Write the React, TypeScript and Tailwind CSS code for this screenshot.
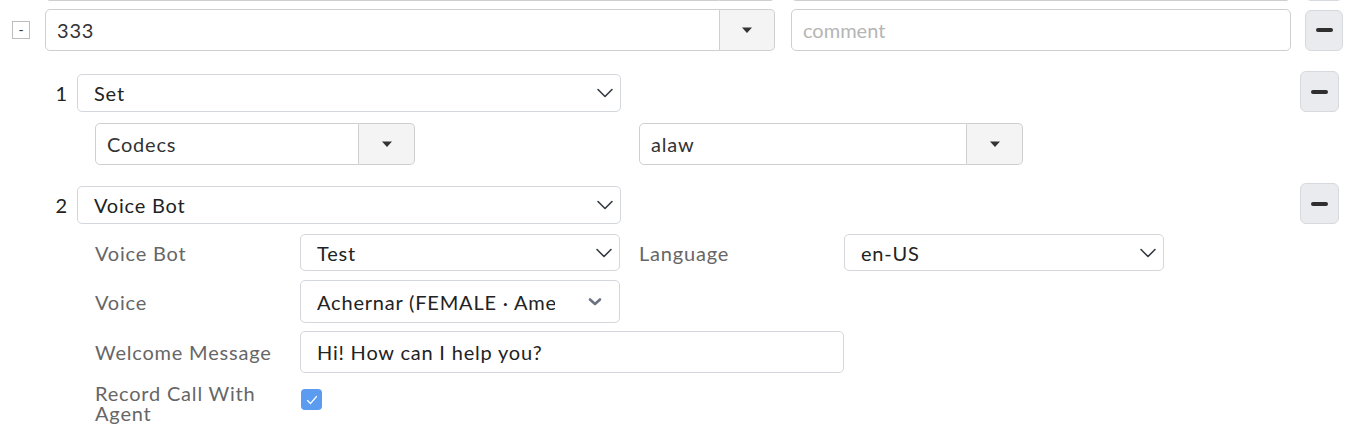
import React from "react";

const font = { fontFamily: "Lato, 'Noto Sans', sans-serif" };

function Caret() {
  return (
    <svg width="12" height="7" viewBox="0 0 12 7">
      <path d="M1 0.5 L11 0.5 L6 6 Z" fill="#333" />
    </svg>
  );
}

function Chevron() {
  return (
    <svg width="18" height="12" viewBox="0 0 18 12" fill="none">
      <path d="M2 2.5 L9 9.5 L16 2.5" stroke="#343a40" strokeWidth="1.6" strokeLinecap="round" strokeLinejoin="round" />
    </svg>
  );
}

function BoldChevron() {
  return (
    <svg width="14" height="10" viewBox="0 0 14 10" fill="none">
      <path d="M2 2.5 L7 7 L12 2.5" stroke="#6b7280" strokeWidth="2.6" strokeLinecap="round" strokeLinejoin="round" />
    </svg>
  );
}

function MinusBtn({ className = "" }: { className?: string }) {
  return (
    <div className={`flex items-center justify-center rounded-md border border-[#d6d9de] bg-[#e9ebef] ${className}`}>
      <div className="h-[4px] w-[17px] rounded-sm bg-[#2f2f2f]" />
    </div>
  );
}

function InputGroup({ value, w, btnW, h = "h-[42px]" }: { value: string; w: string; btnW: string; h?: string }) {
  return (
    <div className={`flex ${w} ${h}`}>
      <div className="flex flex-1 items-center rounded-l-[5px] border border-[#cfcfcf] bg-white pl-[11px] text-[20px] text-[#333]">
        {value}
      </div>
      <div className={`flex ${btnW} items-center justify-center rounded-r-[5px] border border-l-0 border-[#cfcfcf] bg-[#f4f4f4]`}>
        <div className="-ml-[1px] h-full border-l border-[#cfcfcf]" />
        <div className="flex flex-1 items-center justify-center"><Caret /></div>
      </div>
    </div>
  );
}

function Select({ value, w, h = "h-[38px]" }: { value: string; w: string; h?: string }) {
  return (
    <div className={`flex ${w} ${h} items-center justify-between rounded-[5px] border border-[#d3d6db] bg-white pl-[16px] pr-[6px] text-[20px] text-[#222]`}>
      <span>{value}</span>
      <Chevron />
    </div>
  );
}

function TopRow({ peek = false }: { peek?: boolean }) {
  return (
    <div className={`flex items-center ${peek ? "-mt-[41px]" : "mt-[8px]"} h-[42px]`}>
      <div className="ml-[12px] flex h-[18px] w-[18px] items-center justify-center border border-[#bdbdbd] text-[14px] leading-none tracking-normal text-[#333]">
        {peek ? "" : "-"}
      </div>
      <div className="ml-[15px]">
        <InputGroup value={peek ? "" : "333"} w="w-[730px]" btnW="w-[55px]" />
      </div>
      <div className="ml-[16px] flex h-[42px] w-[500px] items-center rounded-[5px] border border-[#cfcfcf] bg-white pl-[11px] text-[20px] tracking-normal text-[#b5b5b5]">
        {peek ? "" : "comment"}
      </div>
      <MinusBtn className="ml-[14px] h-[41px] w-[38px]" />
    </div>
  );
}

function Label({ children, w = "w-[205px]" }: { children: React.ReactNode; w?: string }) {
  return <div className={`${w} text-[20px] leading-[20px] text-[#666]`}>{children}</div>;
}

export default function App() {
  return (
    <div className="h-[434px] w-[1356px] overflow-hidden bg-white tracking-[0.05em]" style={font}>
      <TopRow peek />
      <TopRow />

      {/* Step 1 */}
      <div className="mt-[22px] flex items-center pr-[17px]">
        <div className="w-[68px] text-right text-[20px] text-[#222]">1</div>
        <div className="ml-[9px]">
          <Select value="Set" w="w-[544px]" />
        </div>
        <div className="flex-1" />
        <MinusBtn className="-mt-[2px] h-[41px] w-[39px]" />
      </div>
      <div className="mt-[11px] flex items-center pl-[95px]">
        <InputGroup value="Codecs" w="w-[320px]" btnW="w-[56px]" />
        <div className="ml-[224px]">
          <InputGroup value="alaw" w="w-[384px]" btnW="w-[56px]" />
        </div>
      </div>

      {/* Step 2 */}
      <div className="mt-[20px] flex items-center pr-[17px]">
        <div className="w-[68px] text-right text-[20px] text-[#222]">2</div>
        <div className="ml-[9px]">
          <Select value="Voice Bot" w="w-[544px]" />
        </div>
        <div className="flex-1" />
        <MinusBtn className="-mt-[2px] h-[41px] w-[39px]" />
      </div>

      <div className="mt-[10px] flex flex-col pl-[95px]">
        <div className="flex items-center">
          <Label>Voice Bot</Label>
          <Select value="Test" w="w-[320px]" h="h-[37px]" />
          <div className="ml-[19px]">
            <Label>Language</Label>
          </div>
          <Select value="en-US" w="w-[320px]" h="h-[37px]" />
        </div>
        <div className="mt-[9px] flex items-center">
          <Label>Voice</Label>
          <div className="flex h-[43px] w-[320px] items-center justify-between rounded-[5px] border border-[#d3d6db] bg-white pl-[16px] pr-[17px] text-[20px] text-[#222]">
            <span className="w-[238px] overflow-hidden whitespace-nowrap">Achernar (FEMALE · American)</span>
            <BoldChevron />
          </div>
        </div>
        <div className="mt-[8px] flex items-center">
          <Label>Welcome Message</Label>
          <div className="flex h-[42px] w-[544px] items-center rounded-[5px] border border-[#d3d6db] bg-white pl-[16px] text-[20px] text-[#222]">
            Hi! How can I help you?
          </div>
        </div>
        <div className="mt-[10px] flex items-start">
          <Label>
            <div className="w-[190px]">Record Call With Agent</div>
          </Label>
          <div className="ml-[1px] mt-[6px] flex h-[21px] w-[21px] items-center justify-center rounded-[4px] bg-[#5b9cf0]">
            <svg width="12" height="10" viewBox="0 0 12 10" fill="none">
              <path d="M1.5 5.5 L4.5 8.5 L10.5 1.5" stroke="white" strokeWidth="1.2" strokeLinecap="round" strokeLinejoin="round" />
            </svg>
          </div>
        </div>
      </div>
    </div>
  );
}
